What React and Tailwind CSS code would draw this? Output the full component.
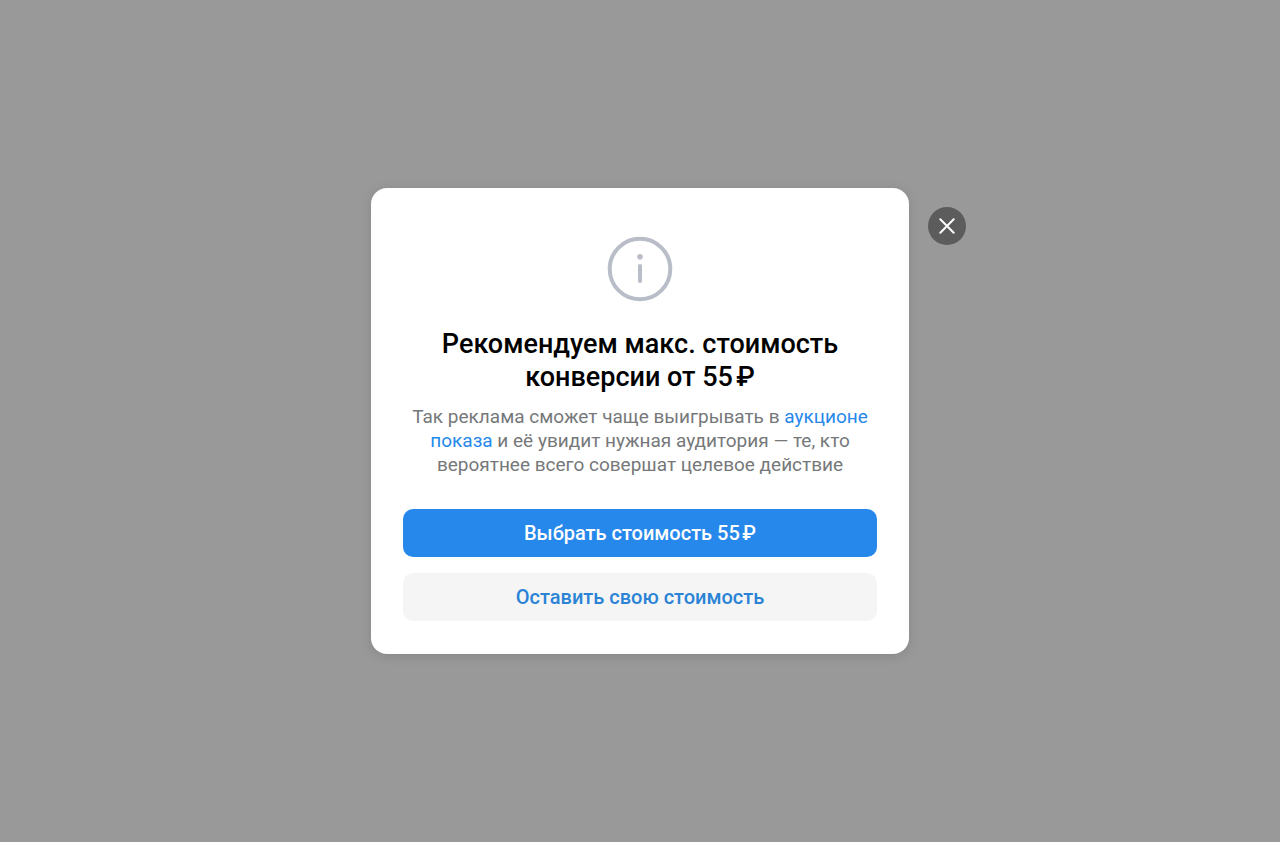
export default function App() {
  return (
    <div className="flex min-h-screen items-center justify-center bg-[#999999] font-['Roboto','Noto_Sans',sans-serif]">
      <div role="dialog" aria-modal="true" aria-labelledby="dialog-title" className="relative w-full max-w-[538px] rounded-2xl bg-white px-8 pt-12 pb-[33px] text-center shadow-[0_2px_12px_rgba(0,0,0,0.12)]">
        <button type="button" aria-label="Закрыть" className="absolute top-[19px] -right-[57px] flex size-[38px] items-center justify-center rounded-full bg-[#5c5c5c] text-white">
          <svg viewBox="0 0 38 38" className="size-[38px]" fill="none" stroke="currentColor" strokeWidth="2" strokeLinecap="round" aria-hidden="true">
            <path d="M12.3 12.3 25.7 25.7M25.7 12.3 12.3 25.7" />
          </svg>
        </button>
        <svg viewBox="0 0 66 66" className="mx-auto size-[66px]" fill="none" aria-hidden="true">
          <circle cx="33" cy="33" r="30.3" stroke="#b8bdc7" strokeWidth="4" />
          <circle cx="33" cy="20.8" r="2.8" fill="#b8bdc7" />
          <path d="M33 30V45" stroke="#b8bdc7" strokeWidth="4" strokeLinecap="round" />
        </svg>
        <h1 id="dialog-title" className="mt-[26px] text-[27px] leading-[33px] font-medium text-black">
          Рекомендуем макс. стоимость
          <br />
          конверсии от 55&#8239;₽
        </h1>
        <p className="mt-[11px] text-[19px] leading-6 text-[#76787a]">
          Так реклама сможет чаще выигрывать в{" "}
          <a href="#auction" className="text-[#2688eb]">
            аукционе
            <br />
            показа
          </a>{" "}
          и её увидит нужная аудитория — те, кто
          <br />
          вероятнее всего совершат целевое действие
        </p>
        <div className="mt-8 flex flex-col gap-4">
          <button type="button" className="h-12 rounded-[10px] bg-[#2688eb] text-xl font-medium text-white">Выбрать стоимость 55&#8239;₽</button>
          <button type="button" className="h-12 rounded-[10px] bg-[#f5f5f5] text-xl font-medium text-[#2b83d6]">Оставить свою стоимость</button>
        </div>
      </div>
    </div>
  );
}
